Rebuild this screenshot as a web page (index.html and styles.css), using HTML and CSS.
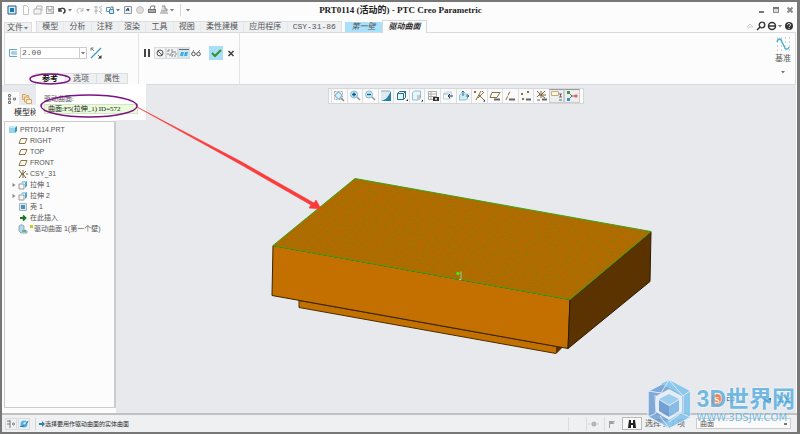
FILE: index.html
```html
<!DOCTYPE html>
<html lang="zh-CN">
<head>
  <meta charset="UTF-8">
  <title>PRT0114 (活动的) - PTC Creo Parametric</title>
  <link rel="stylesheet" href="styles.css">
</head>
<body>
  <svg class="defs" aria-hidden="true">
    <symbol id="i-app" viewBox="0 0 10 10"><path d="M1 1h8v8H1z" fill="#d9edf8" stroke="#24597f"/><path d="M3 3h4v4H3z" fill="#1c78b8"/></symbol>
    <symbol id="i-new" viewBox="0 0 10 10"><path d="M2.500 .5h3l2 2v7h-5z" fill="#fff" stroke="#c4c4c4"/></symbol>
    <symbol id="i-open" viewBox="0 0 10 10"><path d="M1 9V4h7v5zM3 4l1-3h5v5" fill="#f4f4f4" stroke="#b5b5b5"/></symbol>
    <symbol id="i-save" viewBox="0 0 10 10"><path d="M1.500 1.500h7v7h-7zM3 1.500v3h4v-3M3 6h4v2.500" fill="#f2f2f2" stroke="#aaa"/></symbol>
    <symbol id="i-undo" viewBox="0 0 10 10"><path d="M2 3v3h3M2 6c2-4 6-3 6 0 0 1-1 2-2 2" fill="none" stroke="#3c3c3c" stroke-width="1.500"/></symbol>
    <symbol id="i-redo" viewBox="0 0 10 10"><path d="M8 3v3H5M8 6C6 2 2 3 2 6c0 1 1 2 2 2" fill="none" stroke="#bbb"/></symbol>
    <symbol id="i-regen" viewBox="0 0 10 10"><path d="M1 2h4M3 1v8M1 6h4M6 3l3-2M6 6l3 3M8 3v4" fill="none" stroke="#b0b6b9"/></symbol>
    <symbol id="i-windows" viewBox="0 0 10 10"><path d="M1.500 2.500h4v4h-4z" fill="#fff" stroke="#5b94b4"/><path d="M4.500 4.500h4v4h-4z" fill="#cde8f4" stroke="#3f86ad"/><path d="M7 1v2h2" fill="none" stroke="#666"/></symbol>
    <symbol id="i-note" viewBox="0 0 10 10"><path d="M1.500 1.500h7v7h-7z" fill="#e9eff4" stroke="#8d9ba5"/><path d="M3 6l2-3 1 3M3 5h3" stroke="#345" fill="none"/></symbol>
    <symbol id="i-ball" viewBox="0 0 10 10"><circle cx="5" cy="5" r="3.500" fill="#ddd" stroke="#c2c2c2"/></symbol>
    <symbol id="i-print" viewBox="0 0 10 10"><path d="M3 4l1-3h4L7 4" fill="#fff" stroke="#777"/><path d="M1 4h8v4H1z" fill="#707579"/><path d="M2 6h6" stroke="#ddd"/></symbol>
    <symbol id="i-stamp" viewBox="0 0 10 10"><path d="M1 8h8M2 6h6V4H6V1H3" fill="#ddd" stroke="#85898b"/></symbol>
    <symbol id="i-caret" viewBox="0 0 6 6"><path d="M1 2h4L3 4.500z" fill="#777"/></symbol>
    <symbol id="i-min" viewBox="0 0 8 8"><path d="M1 6h5" stroke="#777" stroke-width="2"/></symbol>
    <symbol id="i-max" viewBox="0 0 8 8"><path d="M1.500 2v4.500h5V2z" fill="#ddd" stroke="#888"/><path d="M1 2h6" stroke="#777" stroke-width="2"/></symbol>
    <symbol id="i-close" viewBox="0 0 8 8"><path d="M1.500 1.500l5 5M6.500 1.500l-5 5" stroke="#888" stroke-width="2"/></symbol>
    <symbol id="i-fold" viewBox="0 0 10 10"><path d="M2 6l3-3 3 3z" fill="#fff" stroke="#ccc"/></symbol>
    <symbol id="i-find" viewBox="0 0 10 10"><circle cx="6" cy="4" r="2.800" fill="#eef6fa" stroke="#333" stroke-width="1.300"/><path d="M4 6L1 9" stroke="#333" stroke-width="1.500"/></symbol>
    <symbol id="i-globe" viewBox="0 0 10 10"><circle cx="5" cy="5" r="3.500" fill="#fff" stroke="#333" stroke-width="1.500"/><path d="M1 5h8" stroke="#333" stroke-width="1.500"/></symbol>
    <symbol id="i-help" viewBox="0 0 10 10"><circle cx="5" cy="5" r="4" fill="#333"/><path d="M3.500 4c0-2 3-2 3 0 0 1-1.500 1-1.500 2M5 7v1" fill="none" stroke="#fff"/></symbol>
    <symbol id="i-thick" viewBox="0 0 10 10"><path d="M9 1.500H1.500v7H9M9 4H4v2h5" fill="none" stroke="#62a8cc"/></symbol>
    <symbol id="i-flip" viewBox="0 0 12 12"><path d="M1 11L11 1" stroke="#3a9cc9" stroke-width="1.300"/><path d="M1 1l3 3M1 3.500V1h2.500M8 8l3 3" fill="none" stroke="#777"/><path d="M8 11.500h3.500V8z" fill="#333"/></symbol>
    <symbol id="i-pause" viewBox="0 0 10 10"><path d="M3 1v8M7 1v8" stroke="#444" stroke-width="2"/></symbol>
    <symbol id="i-none" viewBox="0 0 10 10"><circle cx="5" cy="5" r="3" fill="none" stroke="#555"/><path d="M3 3l4 4" stroke="#555"/></symbol>
    <symbol id="i-detach" viewBox="0 0 10 10"><path d="M1 2h5v5H1zM4 4h5v4H4z" fill="none" stroke="#888" stroke-dasharray="2 1"/></symbol>
    <symbol id="i-attach" viewBox="0 0 10 10"><path d="M0 1.500h10" stroke="#667"/><path d="M2 4h3L4 8H1zM6 4h3L8 8H5z" fill="#3eaee2"/></symbol>
    <symbol id="i-glasses" viewBox="0 0 10 10"><circle cx="2.500" cy="6" r="1.800" fill="none" stroke="#555"/><circle cx="7.500" cy="6" r="1.800" fill="none" stroke="#555"/><path d="M1 5l2-3M6 5l3-3" stroke="#777"/></symbol>
    <symbol id="i-ok" viewBox="0 0 12 12"><path d="M2 6l3 3 6-6" fill="none" stroke="#3a8e2f" stroke-width="2"/></symbol>
    <symbol id="i-cancel" viewBox="0 0 10 10"><path d="M2.500 3l5 5M7.500 3l-5 5" stroke="#444" stroke-width="1.600"/></symbol>
    <symbol id="i-datum" viewBox="0 0 14 14"><path d="M1 1h13M1 5h13M1 9h13M1 13h13" stroke="#aaa" stroke-dasharray="1 3"/><path d="M1 5c1-4 4-4 5 0l2 4c1 4 4 4 5 1" fill="none" stroke="#41acd7" stroke-width="1.300"/></symbol>
    <symbol id="i-tree" viewBox="0 0 10 10"><path d="M1.500 .5h2v2h-2zM1.500 4h2v2h-2zM1.500 7.500h2v2h-2zM6.500 4h2v2h-2z" fill="#fff" stroke="#777"/></symbol>
    <symbol id="i-folders" viewBox="0 0 12 12"><path d="M1.500 1.500h3l1 1h2v4h-6z" fill="#f8dcb0" stroke="#d3a768"/><path d="M3.500 4h3l1 1h1v4h-5z" fill="#fbe7c5" stroke="#d3a768"/><path d="M5.500 6.500h5v4h-5z" fill="#fdf2dd" stroke="#d3a768"/></symbol>
    <symbol id="i-part" viewBox="0 0 10 10"><path d="M1 3l2-2h6v5L7 8H1z" fill="#3795bd"/><path d="M1 3h6v5H1z" fill="#95d3ea"/><path d="M1 3l2-2h6L7 3z" fill="#c7e9f6"/></symbol>
    <symbol id="i-plane" viewBox="0 0 10 10"><path d="M3 2.500h6L7 7.500H1z" fill="none" stroke="#8f7440"/></symbol>
    <symbol id="i-csys" viewBox="0 0 10 10"><path d="M1 1l3 4-3 4M5 1v8M3 5h2M8 2L5 5l3 4M9 4v2" fill="none" stroke="#77623a"/></symbol>
    <symbol id="i-extrude" viewBox="0 0 10 10"><path d="M1 4h5v5H1z" fill="#f6f6f6" stroke="#999"/><path d="M3 3l2-2h4v5L7 8V3z" fill="#4ba5cc"/><path d="M3 3l2-2h4L7 3z" fill="#9ad6ec"/></symbol>
    <symbol id="i-shell" viewBox="0 0 10 10"><path d="M1.500 1.500h7v7h-7z" fill="#dfe9ed" stroke="#a8b5bb"/><path d="M3 3h4v4H3z" fill="#3f95bd"/></symbol>
    <symbol id="i-insert" viewBox="0 0 10 10"><path d="M2 5h4M5 2.500L7.500 5 5 7.500" fill="none" stroke="#187c18" stroke-width="1.800"/></symbol>
    <symbol id="i-surface" viewBox="0 0 10 10"><path d="M1 2c2-2 4-1 5 0v4l3 1v2H3L1 7z" fill="#b6d7e4" stroke="#8fa9b4"/><path d="M4 7h4" stroke="#258a65"/></symbol>
    <symbol id="i-expand" viewBox="0 0 6 6"><path d="M1.500 1l3 2-3 2z" fill="#888"/></symbol>
    <symbol id="i-refit" viewBox="0 0 12 12"><path d="M1.500 1.500h8v8h-8z" fill="none" stroke="#aaa" stroke-dasharray="2 1"/><circle cx="5.500" cy="5.500" r="3" fill="#d7f0f8" stroke="#68a9c5"/><path d="M8 8l3 3" stroke="#888" stroke-width="1.500"/></symbol>
    <symbol id="i-zoomin" viewBox="0 0 12 12"><circle cx="5" cy="4.500" r="3.500" fill="#c6e9f5" stroke="#8bbdd2"/><path d="M3 4.500h4M5 2.500v4" stroke="#135a82" stroke-width="1.300"/><path d="M8 7l3 3" stroke="#999" stroke-width="1.500"/></symbol>
    <symbol id="i-zoomout" viewBox="0 0 12 12"><circle cx="5" cy="4.500" r="3.500" fill="#c6e9f5" stroke="#8bbdd2"/><path d="M3 4.500h4" stroke="#135a82" stroke-width="1.300"/><path d="M8 7l3 3" stroke="#999" stroke-width="1.500"/></symbol>
    <symbol id="i-repaint" viewBox="0 0 12 12"><path d="M1 1h10v10H1z" fill="#dcebf1"/><path d="M11 1v10H1c5-1 7-4 10-10z" fill="#287fa6"/><path d="M1 1h9" stroke="#89a9b8"/></symbol>
    <symbol id="i-shade" viewBox="0 0 12 12"><path d="M1.500 3.500h6v6h-6zM1.500 3.500l2-2h6v6l-2 2M7.500 3.500l2-2" fill="#e5f4fa" stroke="#24708f"/><path d="M10 11h2v-2z" fill="#222"/></symbol>
    <symbol id="i-views" viewBox="0 0 12 12"><path d="M1.500 3l2-2h6v7l-2 2h-6z" fill="#e9f6fb" stroke="#8abed3"/><path d="M6 5h3v5H6z" fill="#c3c9cf"/><path d="M10 11.500h2v-2z" fill="#222"/></symbol>
    <symbol id="i-list" viewBox="0 0 12 12"><path d="M1.500 1.500h8v8h-8zM1.500 4h8M1.500 6.500h8M4 1.500v8" fill="#fff" stroke="#aaa"/><path d="M6 7h6v4H6z" fill="#333"/><circle cx="9" cy="9" r="1" fill="#fff"/></symbol>
    <symbol id="i-persp" viewBox="0 0 12 12"><path d="M1.500 4l2-2h6v5l-2 2h-6z" fill="#f3fafc" stroke="#bfd0d8"/><path d="M1.500 4h6v5" fill="none" stroke="#98b5c1"/><path d="M6 6h5M8 4L6 6l2 2" fill="none" stroke="#345"/></symbol>
    <symbol id="i-spin" viewBox="0 0 12 12"><path d="M1.500 5l2-1h6v5l-2 1h-6z" fill="#cfebf5" stroke="#8cc5db"/><path d="M5 6V1M3.500 2.500L5 1l1.500 1.500M8 6h3M9.500 4.500L11 6 9.500 7.500" fill="none" stroke="#2c7396"/></symbol>
    <symbol id="i-datums" viewBox="0 0 12 12"><path d="M1 1l2 2M3 1L1 3M3 10L8 1M6 5l5 5M10 3L5 8M9 1l2 2" stroke="#8b6f3d"/><path d="M10 11.500h2v-2z" fill="#222"/></symbol>
    <symbol id="i-planes" viewBox="0 0 12 12"><path d="M3 2.500h8L8 7.500H1z" fill="none" stroke="#8b6f3d"/><path d="M5 9.500h6" stroke="#666" stroke-width="2"/></symbol>
    <symbol id="i-axes" viewBox="0 0 12 12"><path d="M2 10L6 1" stroke="#8b6f3d" stroke-dasharray="4 1"/><path d="M5 9.500h6" stroke="#666" stroke-width="2"/></symbol>
    <symbol id="i-points" viewBox="0 0 12 12"><path d="M1 3l2 2M3 3L1 5M7 1l2 2M9 1L7 3M2 8l2 2M4 8l-2 2" stroke="#8b6f3d"/><path d="M6 9.500h5" stroke="#666" stroke-width="2"/></symbol>
    <symbol id="i-csyses" viewBox="0 0 12 12"><path d="M1 1l3 3-3 3M5 1v7M9 1L5 5l4 3M3 5h7M1 10h3" fill="none" stroke="#77623a"/><path d="M6 9.500h5" stroke="#666" stroke-width="2"/></symbol>
    <symbol id="i-annot" viewBox="0 0 12 12"><path d="M.5 1.500h7v4h-7z" fill="#fdf3d6" stroke="#bfae83"/><path d="M8 4h3M9.500 4v3M8 7h3M8 10h3" fill="none" stroke="#666"/></symbol>
    <symbol id="i-center" viewBox="0 0 12 12"><path d="M2 2l4 4-4 4M6 6h4" fill="none" stroke="#666"/><path d="M1 1h3v3H1z" fill="#3d9a3d"/><path d="M1 8h3v3H1z" fill="#3a93c0"/><circle cx="10" cy="6" r="1.700" fill="#e26a5b"/></symbol>
    <symbol id="i-nav" viewBox="0 0 10 10"><path d="M4 1v8M1 2h3M1 5h3" stroke="#777"/><circle cx="7.500" cy="5" r="1" fill="none" stroke="#777"/></symbol>
    <symbol id="i-web" viewBox="0 0 10 10"><circle cx="5" cy="5" r="3.500" fill="#58b1df"/><path d="M1 7c2 2 7-2 8-5" fill="none" stroke="#216c9c"/><path d="M4 4l3-1-1 3z" fill="#e4f6ff"/></symbol>
    <symbol id="i-msg" viewBox="0 0 6 6"><path d="M0 2h3V0l3 3-3 3V4H0z" fill="#2583b5"/></symbol>
    <symbol id="i-dot" viewBox="0 0 14 8"><path d="M1 4h12" stroke="#ccc" stroke-dasharray="2 1"/><circle cx="7" cy="4" r="2.500" fill="#b5b5b5"/></symbol>
    <symbol id="i-flag" viewBox="0 0 8 8"><path d="M1 1h6L5 3l2 1H2v4H1z" fill="#a0a0a0"/></symbol>
    <symbol id="i-bino" viewBox="0 0 10 10"><path d="M2 1h2v3h2V1h2l1 8H6V6H4v3H1z" fill="#222"/></symbol>
  </svg>

  <header class="title-bar">
    <div class="quick-access">
      <svg class="icon app"><use href="#i-app"/></svg>
      <button aria-label="新建"><svg class="icon"><use href="#i-new"/></svg></button>
      <button aria-label="打开"><svg class="icon"><use href="#i-open"/></svg></button>
      <button aria-label="保存"><svg class="icon"><use href="#i-save"/></svg></button>
      <button aria-label="撤消"><svg class="icon"><use href="#i-undo"/></svg><svg class="caret"><use href="#i-caret"/></svg></button>
      <button aria-label="重做"><svg class="icon"><use href="#i-redo"/></svg><svg class="caret"><use href="#i-caret"/></svg></button>
      <button aria-label="重新生成"><svg class="icon"><use href="#i-regen"/></svg></button>
      <button aria-label="窗口"><svg class="icon"><use href="#i-windows"/></svg><svg class="caret"><use href="#i-caret"/></svg></button>
      <button aria-label="注释"><svg class="icon"><use href="#i-note"/></svg></button>
      <button aria-label="外观"><svg class="icon"><use href="#i-ball"/></svg></button>
      <button aria-label="打印"><svg class="icon"><use href="#i-print"/></svg></button>
      <button aria-label="发布"><svg class="icon"><use href="#i-stamp"/></svg><svg class="caret"><use href="#i-caret"/></svg></button>
      <i class="divider"></i>
      <button aria-label="自定义"><svg class="caret"><use href="#i-caret"/></svg></button>
    </div>
    <h1>PRT0114 (活动的) - PTC Creo Parametric</h1>
    <div class="window-buttons">
      <button aria-label="最小化"><svg><use href="#i-min"/></svg></button>
      <button aria-label="最大化"><svg><use href="#i-max"/></svg></button>
      <button aria-label="关闭"><svg><use href="#i-close"/></svg></button>
    </div>
  </header>

  <nav class="tab-bar">
    <button class="tab file-tab">文件<svg class="caret"><use href="#i-caret"/></svg></button>
    <div class="tab-group">
      <button class="tab">模型</button>
      <button class="tab">分析</button>
      <button class="tab">注释</button>
      <button class="tab">渲染</button>
      <button class="tab">工具</button>
      <button class="tab">视图</button>
      <button class="tab">柔性建模</button>
      <button class="tab">应用程序</button>
      <button class="tab mono">CSY-31-86</button>
    </div>
    <button class="tab context">第一壁</button>
    <button class="tab context active">驱动曲面</button>
    <div class="help-buttons">
      <button aria-label="折叠"><svg class="icon"><use href="#i-fold"/></svg></button>
      <button aria-label="搜索"><svg class="icon"><use href="#i-find"/></svg></button>
      <button aria-label="在线"><svg class="icon"><use href="#i-globe"/></svg><svg class="caret"><use href="#i-caret"/></svg></button>
      <button aria-label="帮助"><svg class="icon"><use href="#i-help"/></svg></button>
    </div>
  </nav>

  <section class="ribbon">
    <div class="settings">
      <div class="settings-row">
        <svg class="icon"><use href="#i-thick"/></svg>
        <div class="combo">
          <input class="mono" type="text" value="2.00" aria-label="厚度">
          <button aria-label="选择厚度"><svg class="caret"><use href="#i-caret"/></svg></button>
        </div>
        <button aria-label="反向"><svg class="flip"><use href="#i-flip"/></svg></button>
      </div>
      <div class="sub-tabs">
        <button class="sub-tab selected">参考</button>
        <button class="sub-tab">选项</button>
        <button class="sub-tab">属性</button>
      </div>
      <div class="ref-panel">
        <label for="ref">驱动曲面:</label>
        <input type="text" id="ref" value="曲面:F5(拉伸_1) ID=572" readonly>
      </div>
    </div>
    <div class="actions">
      <button aria-label="暂停"><svg class="icon"><use href="#i-pause"/></svg></button>
      <button class="boxed" aria-label="无预览"><svg class="icon"><use href="#i-none"/></svg></button>
      <button class="boxed" aria-label="分离"><svg class="icon"><use href="#i-detach"/></svg></button>
      <button class="boxed on" aria-label="连接"><svg class="icon"><use href="#i-attach"/></svg></button>
      <button aria-label="预览"><svg class="icon"><use href="#i-glasses"/></svg></button>
      <button class="ok" aria-label="确定"><svg><use href="#i-ok"/></svg></button>
      <button aria-label="取消"><svg class="icon"><use href="#i-cancel"/></svg></button>
    </div>
    <button class="datum">
      <svg class="datum-icon"><use href="#i-datum"/></svg>
      基准
      <svg class="caret"><use href="#i-caret"/></svg>
    </button>
  </section>

  <main class="workspace">
    <aside class="sidebar">
      <div class="side-tabs">
        <button class="side-tab selected" aria-label="模型树"><svg class="icon"><use href="#i-tree"/></svg></button>
        <button class="side-tab" aria-label="文件夹"><svg class="folder"><use href="#i-folders"/></svg></button>
      </div>
      <h2>模型树</h2>
      <ul class="tree">
        <li class="root"><svg class="icon"><use href="#i-part"/></svg>PRT0114.PRT</li>
        <li><svg class="icon"><use href="#i-plane"/></svg>RIGHT</li>
        <li><svg class="icon"><use href="#i-plane"/></svg>TOP</li>
        <li><svg class="icon"><use href="#i-plane"/></svg>FRONT</li>
        <li><svg class="icon"><use href="#i-csys"/></svg>CSY_31</li>
        <li class="parent"><svg class="caret"><use href="#i-expand"/></svg><svg class="icon"><use href="#i-extrude"/></svg>拉伸 1</li>
        <li class="parent"><svg class="caret"><use href="#i-expand"/></svg><svg class="icon"><use href="#i-extrude"/></svg>拉伸 2</li>
        <li><svg class="icon"><use href="#i-shell"/></svg>壳 1</li>
        <li><svg class="icon"><use href="#i-insert"/></svg>在此插入</li>
        <li><svg class="icon"><use href="#i-surface"/></svg><i class="pending"></i>驱动曲面 1(第一个壁)</li>
      </ul>
    </aside>

    <div class="graphics">
      <svg class="model" viewBox="116 86 680 327">
        <defs>
          <pattern id="mesh" width="41" height="27" patternUnits="userSpaceOnUse" patternTransform="matrix(.984 .176 -.77 .64 355 179)">
            <path d="M0 2h6M10 2h3M18 2h7M30 2h4M4 5h3M12 5h8M26 5h3M34 5h5M0 9h4M8 9h7M21 9h4M31 9h6M3 13h8M16 13h3M24 13h9M1 17h4M10 17h6M22 17h3M30 17h7M5 21h7M17 21h4M28 21h8M0 25h3M9 25h7M21 25h5M32 25h4" stroke="#5f8a00" stroke-width=".7" stroke-dasharray="3 1" opacity=".8"/>
            <path d="M3 0v27M10 0v27M17 0v27M24 0v27M31 0v27M38 0v27" stroke="#6f7d00" stroke-width=".6" stroke-dasharray="1 3" opacity=".6"/>
          </pattern>
        </defs>
        <path d="M299 301v7l257 46 6-6z" fill="#c27000" stroke="#4a2c00"/>
        <path d="M556 347l6 1-6 6z" fill="#5a3300"/>
        <path d="M273 246l297 54-2 49-296-53z" fill="#c47000" stroke="#3a2300"/>
        <path d="M651 232l-1 50-82 67 2-49z" fill="#5b3300" stroke="#2b1a00"/>
        <path d="M355 179l296 53-81 68-297-54z" fill="#b36a00"/>
        <path d="M355 179l296 53-81 68-297-54z" fill="url(#mesh)" stroke="#3aa515"/>
        <circle cx="458" cy="274" r="1.700" fill="#3df01c"/>
        <path d="M461 272v8h-2" fill="none" stroke="#8ed6a0"/>
        <path d="M470 273h2" stroke="#e8441e" stroke-width="1.500"/>
      </svg>
      <div class="view-tools">
        <button aria-label="重新调整"><svg><use href="#i-refit"/></svg></button>
        <button aria-label="放大"><svg><use href="#i-zoomin"/></svg></button>
        <button aria-label="缩小"><svg><use href="#i-zoomout"/></svg></button>
        <button aria-label="重画"><svg><use href="#i-repaint"/></svg></button>
        <button aria-label="显示样式"><svg><use href="#i-shade"/></svg></button>
        <button aria-label="已保存方向"><svg><use href="#i-views"/></svg></button>
        <button aria-label="视图管理器"><svg><use href="#i-list"/></svg></button>
        <button aria-label="透视图"><svg><use href="#i-persp"/></svg></button>
        <button aria-label="旋转中心"><svg><use href="#i-spin"/></svg></button>
        <button aria-label="基准显示"><svg><use href="#i-datums"/></svg></button>
        <button aria-label="平面显示"><svg><use href="#i-planes"/></svg></button>
        <button aria-label="轴显示"><svg><use href="#i-axes"/></svg></button>
        <button aria-label="点显示"><svg><use href="#i-points"/></svg></button>
        <button aria-label="坐标系显示"><svg><use href="#i-csyses"/></svg></button>
        <button class="pressed" aria-label="注释显示"><svg><use href="#i-annot"/></svg></button>
        <button class="pressed" aria-label="中心显示"><svg><use href="#i-center"/></svg></button>
      </div>
    </div>
  </main>

  <footer class="status-bar">
    <button class="boxed" aria-label="导航器"><svg class="icon"><use href="#i-nav"/></svg></button>
    <button class="boxed" aria-label="浏览器"><svg class="icon"><use href="#i-web"/></svg></button>
    <i class="divider"></i>
    <p><svg class="caret"><use href="#i-msg"/></svg>选择要用作驱动曲面的实体曲面</p>
    <div class="status-cell"></div>
    <div class="status-cell"><svg class="dot"><use href="#i-dot"/></svg></div>
    <div class="status-cell"><svg class="flag"><use href="#i-flag"/></svg></div>
    <button class="find" aria-label="查找"><svg class="icon"><use href="#i-bino"/></svg></button>
    <span class="picked">选择了 1 项</span>
    <select class="filter" aria-label="过滤器"><option>曲面</option></select>
  </footer>

  <svg class="callout" viewBox="0 0 800 434" aria-hidden="true">
    <ellipse cx="50" cy="79" rx="20" ry="5" fill="none" stroke="#7d1083" stroke-width="1.500"/>
    <ellipse cx="89" cy="106" rx="48" ry="11" fill="none" stroke="#7d1083" stroke-width="1.500"/>
    <path d="M137 107L240 161l74 42 2-3 5 9-12-1 2-3-73-42z" fill="#fb3b3b" stroke="#fb3b3b" stroke-width=".6"/>
  </svg>

  <div class="ime">
    <b>S</b>中
    <svg viewBox="0 0 54 12" aria-hidden="true">
      <path d="M2 3c0 3 2 5 5 5-2 1-5 0-5-5zM15 7h2l-1 3zM26 4h7v4h-7z" fill="#1f78bb"/>
      <path d="M39 3l6 6M45 3l-6 6M47 3l6 6M53 3l-6 6" stroke="#1f78bb" stroke-width="1.500"/>
    </svg>
  </div>
  <div class="watermark">
    <svg class="hexagon" viewBox="0 0 46 52">
      <path d="M23 2l21 11v26L23 50 2 39V13z" fill="#6f9fd6" stroke="#e4edf6" stroke-width="1.500"/>
      <path d="M23 2l21 11v26L23 50l-8-5 22-11V18L23 10 15 6z" fill="#7cc3ec"/>
      <path d="M2 13l13 2 8-13M2 39l8-4-1-18M23 50l-9-12M44 39l-9-4-12 9M44 13l-7 5v17M23 2l14 16" fill="none" stroke="#dfeaf5"/>
      <path d="M23 11l13 7v16l-13 8-13-8V18z" fill="#e7eef6"/>
      <path d="M23 16l10 5-10 6-10-6z" fill="#8fc8ef"/>
      <path d="M13 22l10 6v11l-10-6z" fill="#5f94cf"/>
      <path d="M33 22l-10 6v11l10-6z" fill="#78b5e4"/>
    </svg>
    <div>
      <div class="brand">3D世界网</div>
      <div class="site">WWW.3DSJW.COM</div>
    </div>
  </div>
</body>
</html>
```
FILE: styles.css
```css
* {
  box-sizing: border-box;
}
body {
  position: relative;
  display: flex;
  flex-direction: column;
  min-height: 100vh;
  margin: 0;
  border: 2px solid #777;
  border-right-width: 3px;
  background: #fcfcfc;
  font-family: "Liberation Serif", "Noto Sans CJK SC", serif;
  font-size: 8px;
  line-height: 10px;
  color: #555;
}
button {
  display: inline-flex;
  align-items: center;
  justify-content: center;
  padding: 0;
  border: 0;
  background: none;
  font: inherit;
  color: inherit;
}
input,
select {
  min-width: 0;
  padding: 0;
  border: 0;
  font: inherit;
  color: inherit;
}
svg {
  display: block;
  flex: none;
}
.defs {
  display: none;
}
.icon {
  width: 10px;
  height: 10px;
}
.caret {
  width: 6px;
  height: 6px;
}
.divider {
  width: 1px;
  height: 12px;
  background: #d5d5d5;
}
.mono {
  font-family: "Liberation Mono", monospace;
}

/* タイトル */
.title-bar {
  display: grid;
  grid-template-columns: 1fr auto 1fr;
  align-items: center;
  height: 18px;
  padding: 0 3px 2px 5px;
}
.quick-access,
.help-buttons {
  display: flex;
  align-items: center;
  gap: 2px;
}
.app {
  margin-right: 2px;
}
.quick-access .divider {
  margin: 0 2px 0 3px;
}
.title-bar h1 {
  margin: 0;
  font-size: 9px;
  font-weight: bold;
  color: #222;
}
.window-buttons {
  display: flex;
  justify-content: flex-end;
  gap: 6px;
}
.window-buttons svg {
  width: 8px;
  height: 8px;
}

.tab-bar {
  display: flex;
  align-items: flex-end;
  height: 12px;
  padding: 0 3px 0 2px;
}
.tab {
  flex: 1 1 auto;
  height: 10px;
  background: #eef0f2;
}
.file-tab {
  flex: 0 0 28px;
  border: 1px solid #dcdee0;
  border-bottom: 0;
}
.tab-group {
  display: flex;
  flex: 0 1 306px;
  margin: 0 3px 0 4px;
  border: 1px solid #dcdee0;
  border-bottom: 0;
}
.tab-group .tab + .tab {
  border-left: 1px solid #e6e8ea;
}
.context {
  flex: 0 0 37px;
  background: #a9e1fb;
  font-style: italic;
}
.context.active {
  z-index: 1;
  flex-basis: 45px;
  height: 13px;
  margin-bottom: -1px;
  border: 1px solid #d5d8db;
  border-bottom: 0;
  background: #fcfcfc;
  font-weight: bold;
  color: #333;
}
.help-buttons {
  margin-left: auto;
  align-self: center;
  gap: 1px;
}

.ribbon {
  display: flex;
  height: 53px;
  margin: 0 1px 0 2px;
  border: 1px solid #d9dbde;
}
.settings {
  position: relative;
  display: flex;
  flex-direction: column;
  justify-content: space-between;
  width: 134px;
  border-right: 1px solid #e4e4e4;
}
.settings-row {
  display: flex;
  align-items: center;
  gap: 2px;
  padding: 14px 3px 0;
}
.combo {
  display: flex;
  width: 67px;
  height: 12px;
  border: 1px solid #ccc;
  background: #fff;
}
.combo input {
  flex: 1;
  padding-left: 1px;
}
.combo button {
  border-left: 1px solid #ccc;
}
.flip {
  width: 12px;
  height: 12px;
  margin-left: 1px;
}
.sub-tabs {
  display: flex;
  margin-left: 30px;
}
.sub-tab {
  width: 31px;
  height: 11px;
  border: 1px solid #dcdee0;
  border-left: 0;
  background: #eef0f2;
}
.sub-tab.selected {
  background: #fcfcfc;
  font-weight: bold;
  color: #111;
}
.ref-panel {
  position: absolute;
  z-index: 2;
  top: 100%;
  left: 31px;
  width: 110px;
  height: 36px;
  padding: 10px 8px 0;
  background: #fff;
  font-size: 7px;
}
.ref-panel label {
  display: block;
}
.ref-panel input {
  display: block;
  width: 100%;
  height: 10px;
  padding-left: 3px;
  border: 1px solid #d6e3c9;
  background: #e9fbd9;
  color: #222;
}
.actions {
  display: flex;
  align-items: flex-start;
  gap: 2px;
  width: 101px;
  padding: 15px 3px 0;
  border-right: 1px solid #e4e4e4;
}
.boxed {
  outline: 1px solid #d9dbdd;
  background: #f0f1f2;
}
.on {
  background: #d3e6f0;
}
.actions .boxed {
  margin-left: 1px;
  margin-right: -1px;
}
.actions .on {
  margin-right: 0;
}
.actions .ok {
  width: 14px;
  height: 14px;
  margin: -2px 1px 0 6px;
  background: #a7dff9;
}
.ok svg {
  width: 12px;
  height: 12px;
}
.datum {
  flex-direction: column;
  justify-content: flex-start;
  gap: 3px;
  margin-left: auto;
  padding: 4px 4px 0;
}
.datum-icon {
  width: 14px;
  height: 14px;
}
.datum .caret {
  margin-top: 2px;
}

.workspace {
  display: flex;
  flex: 1;
  margin-right: 1px;
  background: #e8e9ed;
}
.sidebar {
  display: flex;
  flex-direction: column;
  width: 114px;
  padding: 7px 0 5px 2px;
  background: linear-gradient(#e8e9ed 7px, #fcfcfc 7px);
}
.side-tabs {
  display: flex;
  background: #e8e9ed;
}
.side-tab {
  width: 15px;
  height: 13px;
}
.side-tab.selected {
  background: #fcfcfc;
}
.folder {
  width: 12px;
  height: 12px;
}
.sidebar h2 {
  margin: 3px 0 3px 10px;
  font-size: 8px;
  line-height: 10px;
  font-weight: normal;
  color: #222;
}
.tree {
  flex: 1;
  margin: 0;
  padding: 2px 0 0;
  border: 1px solid #ccc;
  border-width: 1px 2px 1px 1px;
  list-style: none;
  font-family: "Liberation Sans", "Noto Sans CJK SC", sans-serif;
  font-size: 7px;
}
.tree li {
  display: flex;
  align-items: center;
  height: 11px;
  padding-left: 13px;
}
.tree .icon {
  margin-right: 2px;
}
.tree .root {
  padding-left: 3px;
}
.tree .parent {
  padding-left: 6px;
}
.tree .parent .caret {
  margin-right: 1px;
}
.pending {
  align-self: flex-start;
  width: 3px;
  height: 3px;
  margin: 2px 1px 0 0;
  background: #c9c92b;
}

.graphics {
  display: grid;
  flex: 1;
  min-width: 0;
}
.graphics > * {
  grid-area: 1 / 1;
}
.model {
  width: 100%;
  height: 100%;
}
.view-tools {
  display: grid;
  grid-template-columns: repeat(16, 1fr);
  align-self: start;
  justify-self: center;
  width: 256px;
  height: 16px;
  margin-top: 3px;
  padding: 0 3px 0 2px;
  border: 1px solid #d5d7da;
  background: #fafafa;
}
.view-tools button {
  border-left: 1px solid #dcdee0;
}
.view-tools svg {
  width: 12px;
  height: 12px;
}
.view-tools .pressed {
  border: 1px solid #ccc;
  border-top-color: #999;
  background: #eceef0;
}

.status-bar {
  display: flex;
  align-items: center;
  height: 19px;
  padding: 0 6px 0 4px;
  gap: 3px;
  border-top: 2px solid #bfc1c3;
  background: #eff0f1;
}
.status-bar .divider {
  margin: 0 0 0 3px;
}
.status-bar p {
  display: flex;
  align-items: center;
  flex: 1;
  margin: 0;
  font-size: 6px;
  color: #333;
}
.status-cell {
  display: flex;
  align-items: center;
  width: 15px;
  height: 14px;
  border-left: 1px solid #dcdcdc;
}
.dot {
  width: 14px;
  height: 8px;
}
.flag {
  width: 8px;
  height: 8px;
  margin-left: 3px;
}
.find {
  width: 20px;
  height: 13px;
  border: 1px solid #bbb;
  background: #fafafa;
}
.picked {
  width: 48px;
}
.filter {
  width: 95px;
  height: 11px;
  padding-left: 3px;
  border: 1px solid #ccc;
  appearance: none;
  background: linear-gradient(#777, #777) right 3px center / 3px 2px no-repeat #fafafa;
  font-size: 7px;
}

/* 矢印と楕円の注釈 */
.callout {
  position: absolute;
  z-index: 3;
  top: -2px;
  left: -2px;
  width: 100vw;
  pointer-events: none;
}
.watermark {
  position: absolute;
  z-index: 4;
  right: 2px;
  bottom: 2px;
  display: flex;
  align-items: center;
  gap: 5px;
  opacity: 0.85;
  pointer-events: none;
  font-family: "Liberation Sans", "Noto Sans CJK SC", sans-serif;
  color: #5fb0de;
}
.hexagon {
  width: 46px;
  height: 52px;
}
.brand {
  font-size: 23px;
  font-weight: bold;
  line-height: 27px;
  text-shadow: 0 0 2px #fff, 0 0 2px #fff;
}
.site {
  font-family: "DejaVu Sans", sans-serif;
  font-size: 10px;
  line-height: 10px;
  text-shadow: 0 0 2px #fff;
}
.ime {
  position: absolute;
  z-index: 3;
  right: 5px;
  bottom: 26px;
  display: flex;
  gap: 3px;
  font-size: 9px;
  line-height: 12px;
  color: #1f78bb;
}
.ime b {
  width: 12px;
  border-radius: 50%;
  background: #ef7a50;
  text-align: center;
  color: #fff;
}
.ime svg {
  width: 54px;
  height: 12px;
}
```
